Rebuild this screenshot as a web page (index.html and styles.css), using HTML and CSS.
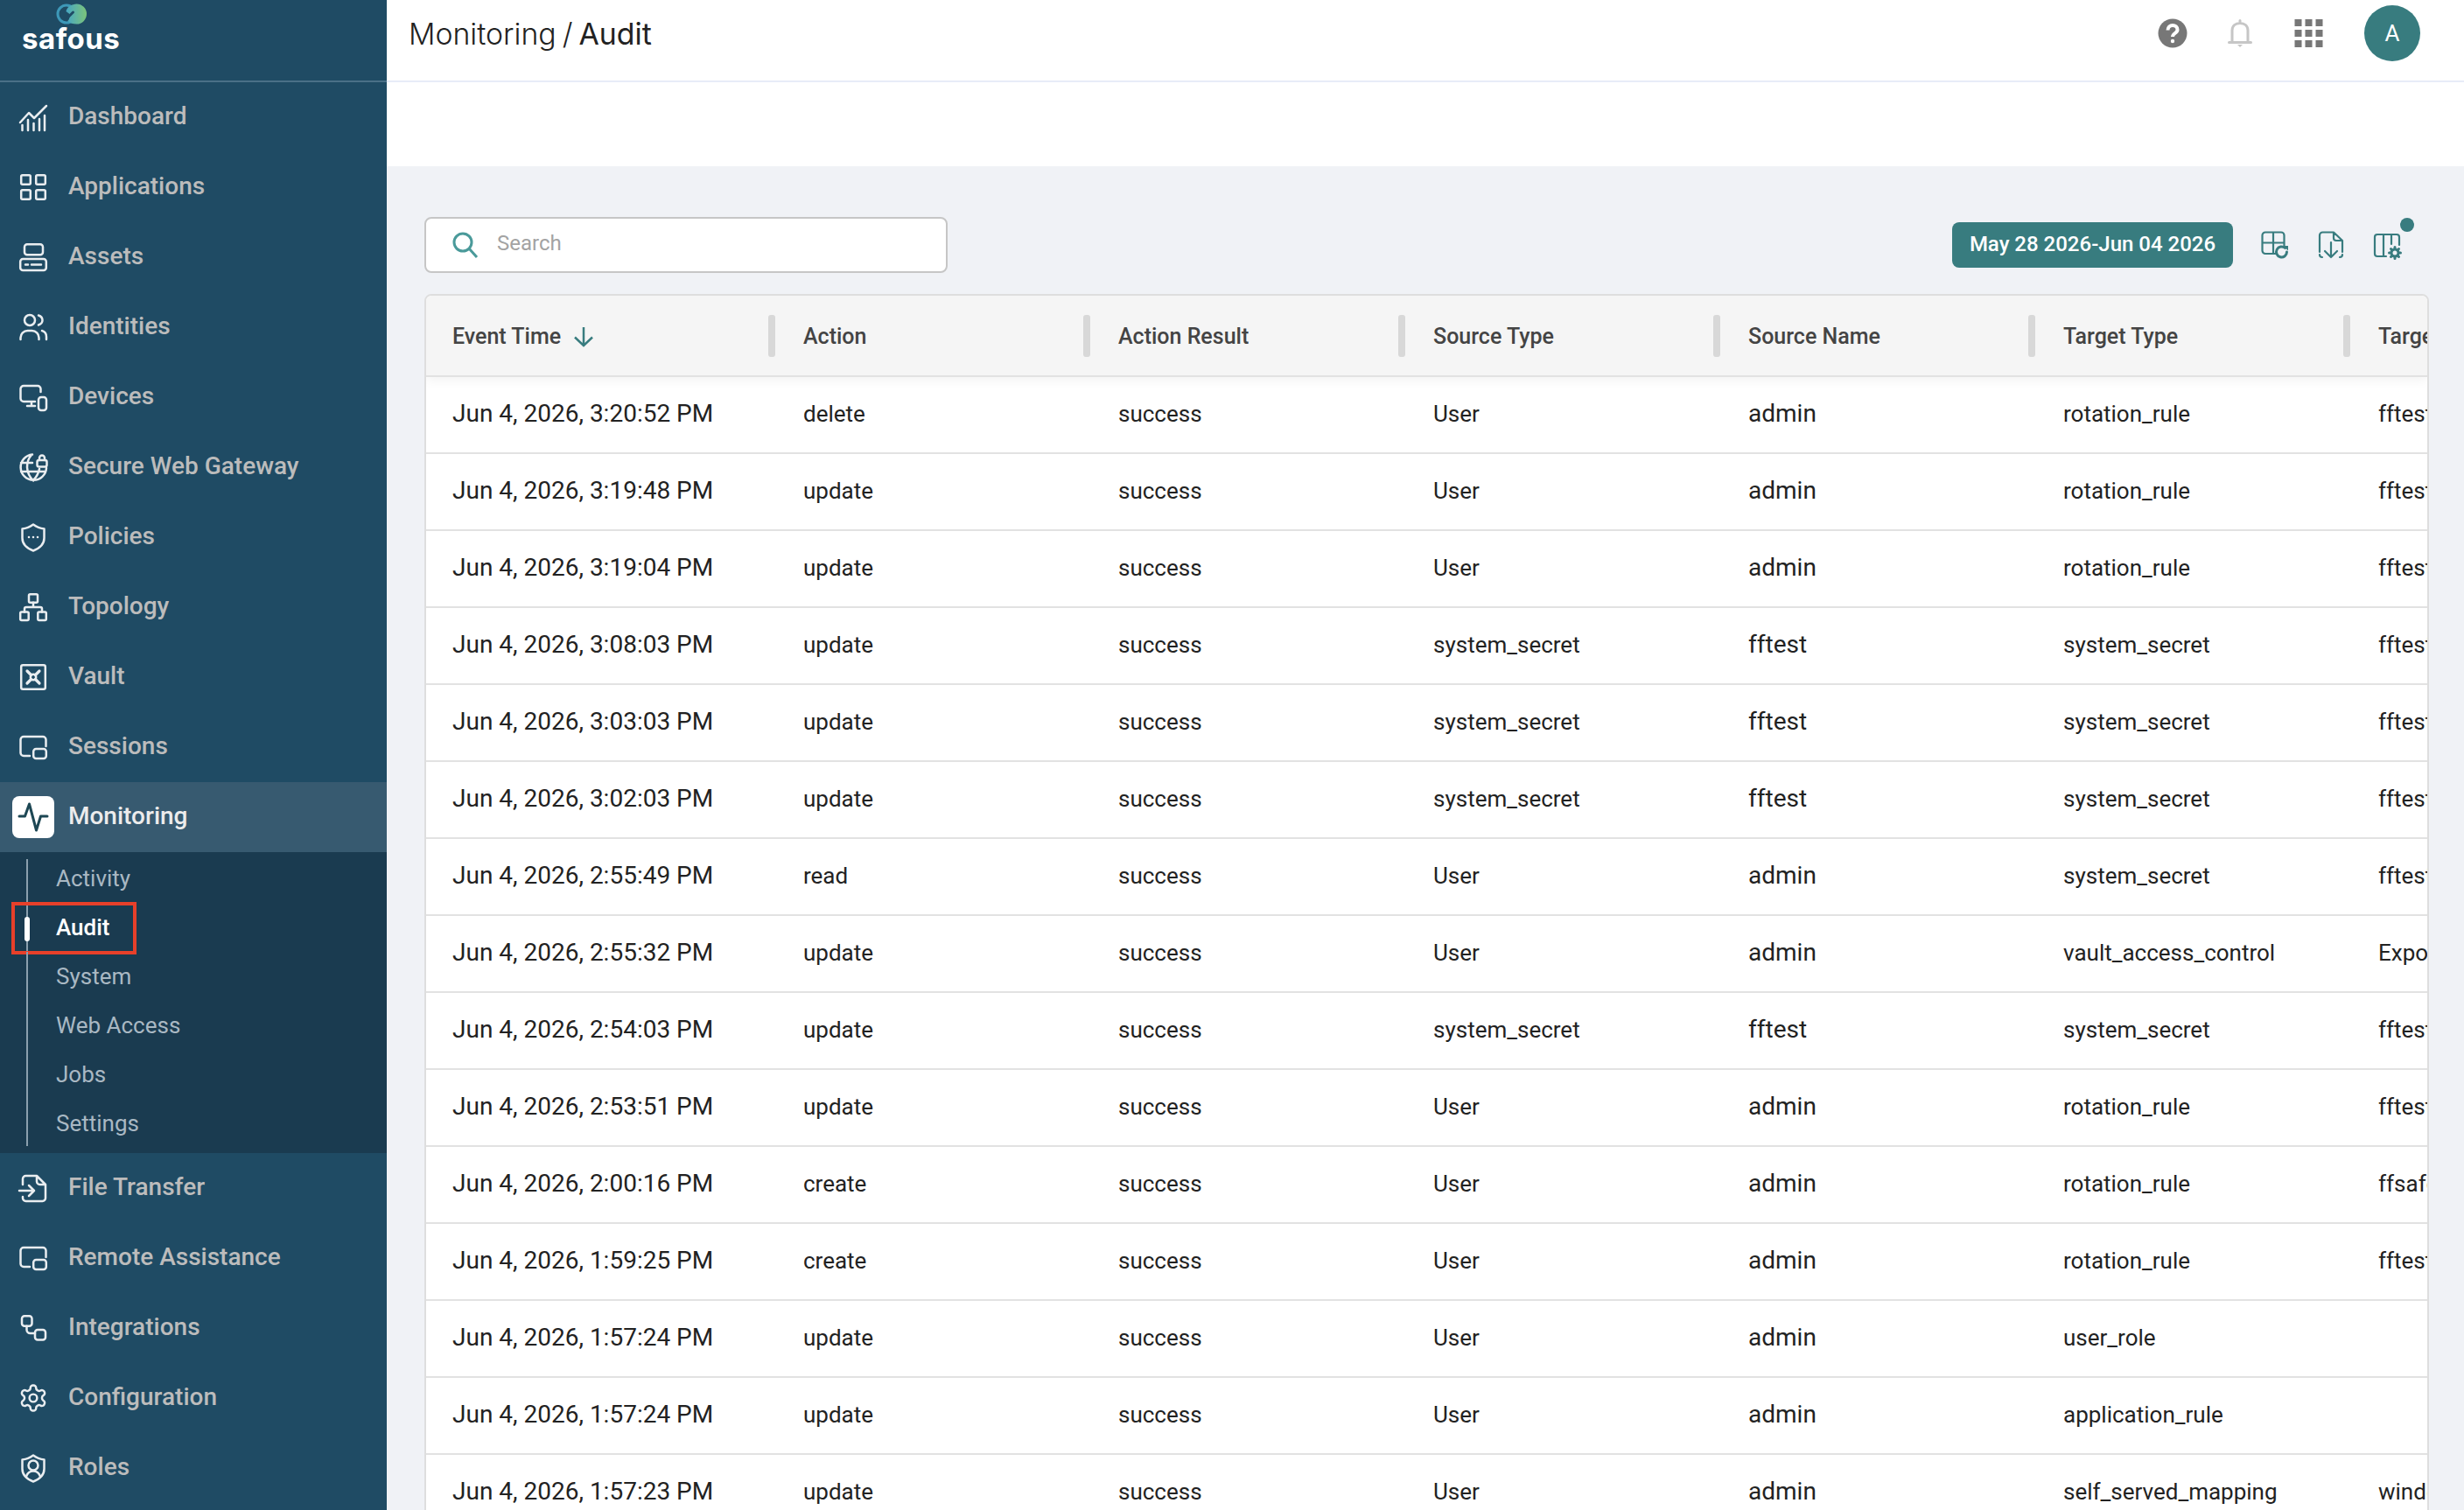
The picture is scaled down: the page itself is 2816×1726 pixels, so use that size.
FILE: index.html
```html
<!DOCTYPE html>
<html lang="en">
<head>
<meta charset="utf-8">
<title>Monitoring / Audit</title>
<link rel="stylesheet" href="styles.css">
</head>
<body>
<div class="app">
<aside class="sidebar">
  <div class="brand">
    <svg class="brand-mark" viewBox="0 0 34 24"><defs><linearGradient id="lg" x1="0" x2="1" y1="0" y2="0"><stop offset="0" stop-color="#46a6c4"/><stop offset="1" stop-color="#7cc47a"/></linearGradient></defs><circle cx="11.5" cy="12" r="10" fill="none" stroke="#3d98b8" stroke-width="3"/><path d="M11 9c1-5 7-8.500 12-8.500a11.500 11.500 0 0 1 0 23c-4 0-8-1-10-4 2-1 2-4 2-7.500z" fill="url(#lg)"/><path d="M13 16l6-6" stroke="#1f4b64" stroke-width="3" stroke-linecap="round"/></svg>
    <span class="brand-name">safous</span>
  </div>
  <nav class="nav">
    <a class="nav-item"><svg class="ico" viewBox="0 0 32 32"><path d="M1 22L11 11l6 6L31 3M3.500 31v-6M10 31V19M16.500 31v-8M23 31V18M29 31V14"/></svg><span>Dashboard</span></a>
    <a class="nav-item"><svg class="ico" viewBox="0 0 32 32"><rect x="2.200" y="2.200" width="10.600" height="10.600" rx="1.500"/><rect x="19.200" y="2.200" width="10.600" height="10.600" rx="1.500"/><rect x="2.200" y="19.200" width="10.600" height="10.600" rx="1.500"/><rect x="19.200" y="19.200" width="10.600" height="10.600" rx="1.500"/></svg><span>Applications</span></a>
    <a class="nav-item"><svg class="ico" viewBox="0 0 32 32"><rect x="6" y="1.200" width="21" height="12" rx="3"/><rect x="1.200" y="18" width="29.600" height="13" rx="3"/><path d="M7 24.500h3M14 24.500h11"/></svg><span>Assets</span></a>
    <a class="nav-item"><svg class="ico" viewBox="0 0 32 32"><circle cx="12" cy="8" r="6"/><path d="M22 2.500c3 1 4.500 3 4.500 5.500s-1.500 4.500-4.500 5.500M1.500 30v-2a8 8 0 0 1 8-8h5a8 8 0 0 1 8 8v2M26 20c3.500 1 5 4 5 7v3"/></svg><span>Identities</span></a>
    <a class="nav-item"><svg class="ico" viewBox="0 0 32 32"><path d="M18 21H5a3.500 3.500 0 0 1-3.500-3.500V6.500A3.500 3.500 0 0 1 5 3h16a3.500 3.500 0 0 1 3.500 3.500V10M9 26h9M14 21v5"/><rect x="22" y="16" width="9" height="15" rx="3"/></svg><span>Devices</span></a>
    <a class="nav-item"><svg class="ico" viewBox="0 0 32 32"><path d="M15 1.500A14.700 14.700 0 1 0 31 17M14 2c-7 8-7 20 2 29.500M16 31c4-4 6-8 7-13M2 11h13M2 21h28"/><rect x="20.500" y="8" width="11" height="7.500" rx="2"/><path d="M23 8V5.500a3 3 0 0 1 6 0V8"/></svg><span>Secure Web Gateway</span></a>
    <a class="nav-item"><svg class="ico" viewBox="0 0 32 32"><path d="M16 1.500c4 3 8 4.500 12.500 5v10.500c0 7-6 12-12.500 14.500C9.500 29 3.500 24 3.500 17V6.500C8 6 12 4.500 16 1.500z"/><path class="dots" d="M11 16h.01M16 16h.01M21 16h.01"/></svg><span>Policies</span></a>
    <a class="nav-item"><svg class="ico" viewBox="0 0 32 32"><rect x="11" y="1.200" width="10" height="9.500" rx="1.500"/><rect x="1.200" y="21.500" width="9.500" height="9.500" rx="1.500"/><rect x="21.300" y="21.500" width="9.500" height="9.500" rx="1.500"/><path d="M16 10.700V16M6 21.500V18a2 2 0 0 1 2-2h16a2 2 0 0 1 2 2v3.500"/></svg><span>Topology</span></a>
    <a class="nav-item"><svg class="ico" viewBox="0 0 32 32"><rect x="2.200" y="2.200" width="27.600" height="27.600" rx="2"/><path class="thick" d="M9 9l4.500 4.500M23 9l-4.500 4.500M9 23l4.500-4.500M23 23l-4.500-4.500"/><circle cx="16" cy="16" r="3.200"/></svg><span>Vault</span></a>
    <a class="nav-item"><svg class="ico" viewBox="0 0 32 32"><path d="M12 26H5a3.500 3.500 0 0 1-3.500-3.500v-15A3.500 3.500 0 0 1 5 4h22a3.500 3.500 0 0 1 3.500 3.500V15"/><rect x="16.200" y="18" width="14.600" height="11" rx="3"/></svg><span>Sessions</span></a>
    <a class="nav-item active"><span class="ico-box"><svg class="ico pulse" viewBox="0 0 32 32"><path d="M0 15h6.500L11.500 1l8 30 5-16H32"/></svg></span><span>Monitoring</span></a>
    <ul class="subnav">
      <li>Activity</li>
      <li class="current">Audit</li>
      <li>System</li>
      <li>Web Access</li>
      <li>Jobs</li>
      <li>Settings</li>
    </ul>
    <a class="nav-item"><svg class="ico" viewBox="0 0 32 32"><path d="M4 12V5.500A3.500 3.500 0 0 1 7.500 2H20l10 10v15.500a3.500 3.500 0 0 1-3.500 3.500h-19A3.500 3.500 0 0 1 4 27.500V26M20 2v6.500a3.500 3.500 0 0 0 3.500 3.500H30M0 19h17M11 13l6 6-6 6"/></svg><span>File Transfer</span></a>
    <a class="nav-item"><svg class="ico" viewBox="0 0 32 32"><path d="M12 26H5a3.500 3.500 0 0 1-3.500-3.500v-15A3.500 3.500 0 0 1 5 4h22a3.500 3.500 0 0 1 3.500 3.500V15"/><rect x="16.200" y="18" width="14.600" height="11" rx="3"/></svg><span>Remote Assistance</span></a>
    <a class="nav-item"><svg class="ico" viewBox="0 0 32 32"><rect x="3" y="2.200" width="11.500" height="11.500" rx="3"/><rect x="18" y="18" width="12" height="11.500" rx="3"/><path d="M8.500 13.700V18a4 4 0 0 0 4 4H18"/></svg><span>Integrations</span></a>
    <a class="nav-item"><svg class="ico gear" viewBox="1 1 22 22"><path d="M12.220 2h-.44a2 2 0 0 0-2 2v.18a2 2 0 0 1-1 1.730l-.43.25a2 2 0 0 1-2 0l-.15-.08a2 2 0 0 0-2.730.73l-.22.38a2 2 0 0 0 .73 2.730l.15.1a2 2 0 0 1 1 1.720v.51a2 2 0 0 1-1 1.740l-.15.09a2 2 0 0 0-.73 2.730l.22.38a2 2 0 0 0 2.730.73l.15-.08a2 2 0 0 1 2 0l.43.25a2 2 0 0 1 1 1.730V20a2 2 0 0 0 2 2h.44a2 2 0 0 0 2-2v-.18a2 2 0 0 1 1-1.730l.43-.25a2 2 0 0 1 2 0l.15.08a2 2 0 0 0 2.730-.73l.22-.39a2 2 0 0 0-.73-2.730l-.15-.08a2 2 0 0 1-1-1.740v-.5a2 2 0 0 1 1-1.740l.15-.09a2 2 0 0 0 .73-2.730l-.22-.38a2 2 0 0 0-2.730-.73l-.15.08a2 2 0 0 1-2 0l-.43-.25a2 2 0 0 1-1-1.730V4a2 2 0 0 0-2-2z"/><circle cx="12" cy="12" r="3"/></svg><span>Configuration</span></a>
    <a class="nav-item"><svg class="ico" viewBox="0 0 32 32"><path d="M16 1.500c4 3 8 4.500 12.500 5v10.500c0 7-6 12-12.500 14.500C9.500 29 3.500 24 3.500 17V6.500C8 6 12 4.500 16 1.500z"/><circle cx="16" cy="13" r="5.500"/><path d="M8 25.500c1.500-4 4.500-6 8-6s6.500 2 8 6"/></svg><span>Roles</span></a>
  </nav>
</aside>
<main class="main">
  <header class="topbar">
    <h1 class="crumbs"><span class="crumb-parent">Monitoring / </span>Audit</h1>
    <div class="top-actions">
      <svg class="help" viewBox="0 0 34 34"><circle cx="17" cy="17" r="16.500"/><path d="M11.500 13.500c0-3.500 2.500-5.500 5.500-5.500s5.500 2 5.500 5c0 4-5.500 4-5.500 8"/><circle class="help-dot" cx="17" cy="26" r="2.200"/></svg>
      <svg class="bell" viewBox="0 0 28 34"><path d="M14 2.500v3M5 26V14c0-5.500 4-8.500 9-8.500s9 3 9 8.500v12M1.500 27.500h25"/><path class="bell-clap" d="M11 30h6l-3 3z"/></svg>
      <svg class="apps" viewBox="0 0 32 32"><rect width="8" height="8"/><rect x="12" width="8" height="8"/><rect x="24" width="8" height="8"/><rect y="12" width="8" height="8"/><rect x="12" y="12" width="8" height="8"/><rect x="24" y="12" width="8" height="8"/><rect y="24" width="8" height="8"/><rect x="12" y="24" width="8" height="8"/><rect x="24" y="24" width="8" height="8"/></svg>
      <div class="avatar">A</div>
    </div>
  </header>
  <div class="spacer"></div>
  <section class="content">
    <div class="toolbar">
      <label class="search">
        <svg class="search-ico" viewBox="0 0 30 30"><circle cx="12" cy="12" r="10"/><path d="M19 19l9 10"/></svg>
        <span>Search</span>
      </label>
      <div class="tools">
        <button class="range">May 28 2026-Jun 04 2026</button>
        <svg class="tool" viewBox="0 0 32 32"><path d="M17 26H5a3.500 3.500 0 0 1-3.500-3.500V5A3.500 3.500 0 0 1 5 1.500h18A3.500 3.500 0 0 1 26.500 5v12M14 1.500V26M1.500 13.500h25"/><path class="thick" d="M29.500 24a6 6 0 1 1-2-4.500"/><path class="fillhead" d="M25.500 17h5.500v5.500z"/></svg>
        <svg class="tool" viewBox="0 0 32 32"><path d="M3 24V5a3.500 3.500 0 0 1 3.500-3.500H19L29 11v13M19 1.500V8a3 3 0 0 0 3 3h7M16 13v17M9 23l7 7 7-7M3 27a3 3 0 0 0 3 3M29 27a3 3 0 0 1-3 3"/></svg>
        <div class="tool-wrap">
          <svg class="tool" viewBox="0 0 32 32"><path d="M15 29H5a3 3 0 0 1-3-3V7a3 3 0 0 1 3-3h22a3 3 0 0 1 3 3v9M12 4v25M21 4v11"/><circle class="thick" cx="25" cy="25" r="4"/><path class="thick" d="M25 18.500v2M25 29.500v2M18.500 25h2M29.500 25h2M20.500 20.500l1.500 1.500M28 28l1.500 1.500M20.500 29.500L22 28M28 22l1.500-1.500"/></svg>
          <span class="dot"></span>
        </div>
      </div>
    </div>
    <div class="table">
      <div class="row head">
        <div class="cell"><span class="head-label">Event Time<svg class="sort" viewBox="0 0 24 24"><path d="M12 1v21M2 12.500L12 22l10-9.500"/></svg></span><i class="sep"></i></div>
        <div class="cell">Action<i class="sep"></i></div>
        <div class="cell">Action Result<i class="sep"></i></div>
        <div class="cell">Source Type<i class="sep"></i></div>
        <div class="cell">Source Name<i class="sep"></i></div>
        <div class="cell">Target Type<i class="sep"></i></div>
        <div class="cell">Target Name</div>
      </div>
      <div class="row"><div class="cell big">Jun 4, 2026, 3:20:52 PM</div><div class="cell">delete</div><div class="cell">success</div><div class="cell">User</div><div class="cell big">admin</div><div class="cell">rotation_rule</div><div class="cell">fftest</div></div>
      <div class="row"><div class="cell big">Jun 4, 2026, 3:19:48 PM</div><div class="cell">update</div><div class="cell">success</div><div class="cell">User</div><div class="cell big">admin</div><div class="cell">rotation_rule</div><div class="cell">fftest</div></div>
      <div class="row"><div class="cell big">Jun 4, 2026, 3:19:04 PM</div><div class="cell">update</div><div class="cell">success</div><div class="cell">User</div><div class="cell big">admin</div><div class="cell">rotation_rule</div><div class="cell">fftest</div></div>
      <div class="row"><div class="cell big">Jun 4, 2026, 3:08:03 PM</div><div class="cell">update</div><div class="cell">success</div><div class="cell">system_secret</div><div class="cell big">fftest</div><div class="cell">system_secret</div><div class="cell">fftest</div></div>
      <div class="row"><div class="cell big">Jun 4, 2026, 3:03:03 PM</div><div class="cell">update</div><div class="cell">success</div><div class="cell">system_secret</div><div class="cell big">fftest</div><div class="cell">system_secret</div><div class="cell">fftest</div></div>
      <div class="row"><div class="cell big">Jun 4, 2026, 3:02:03 PM</div><div class="cell">update</div><div class="cell">success</div><div class="cell">system_secret</div><div class="cell big">fftest</div><div class="cell">system_secret</div><div class="cell">fftest</div></div>
      <div class="row"><div class="cell big">Jun 4, 2026, 2:55:49 PM</div><div class="cell">read</div><div class="cell">success</div><div class="cell">User</div><div class="cell big">admin</div><div class="cell">system_secret</div><div class="cell">fftest</div></div>
      <div class="row"><div class="cell big">Jun 4, 2026, 2:55:32 PM</div><div class="cell">update</div><div class="cell">success</div><div class="cell">User</div><div class="cell big">admin</div><div class="cell">vault_access_control</div><div class="cell">Export</div></div>
      <div class="row"><div class="cell big">Jun 4, 2026, 2:54:03 PM</div><div class="cell">update</div><div class="cell">success</div><div class="cell">system_secret</div><div class="cell big">fftest</div><div class="cell">system_secret</div><div class="cell">fftest</div></div>
      <div class="row"><div class="cell big">Jun 4, 2026, 2:53:51 PM</div><div class="cell">update</div><div class="cell">success</div><div class="cell">User</div><div class="cell big">admin</div><div class="cell">rotation_rule</div><div class="cell">fftest</div></div>
      <div class="row"><div class="cell big">Jun 4, 2026, 2:00:16 PM</div><div class="cell">create</div><div class="cell">success</div><div class="cell">User</div><div class="cell big">admin</div><div class="cell">rotation_rule</div><div class="cell">ffsafous</div></div>
      <div class="row"><div class="cell big">Jun 4, 2026, 1:59:25 PM</div><div class="cell">create</div><div class="cell">success</div><div class="cell">User</div><div class="cell big">admin</div><div class="cell">rotation_rule</div><div class="cell">fftest</div></div>
      <div class="row"><div class="cell big">Jun 4, 2026, 1:57:24 PM</div><div class="cell">update</div><div class="cell">success</div><div class="cell">User</div><div class="cell big">admin</div><div class="cell">user_role</div><div class="cell"></div></div>
      <div class="row"><div class="cell big">Jun 4, 2026, 1:57:24 PM</div><div class="cell">update</div><div class="cell">success</div><div class="cell">User</div><div class="cell big">admin</div><div class="cell">application_rule</div><div class="cell"></div></div>
      <div class="row"><div class="cell big">Jun 4, 2026, 1:57:23 PM</div><div class="cell">update</div><div class="cell">success</div><div class="cell">User</div><div class="cell big">admin</div><div class="cell">self_served_mapping</div><div class="cell">windows</div></div>
    </div>
  </section>
</main>
</div>
</body>
</html>
```
FILE: styles.css
```css
* { box-sizing: border-box; }
html, body { margin: 0; height: 100%; overflow: hidden; }
body { font-family: Roboto, "Liberation Sans", sans-serif; background: #f0f2f6; color: #222; }
.app { display: flex; height: 1726px; overflow: hidden; }

/* Sidebar */
.sidebar { width: 442px; flex: none; background: #1f4b64; display: flex; flex-direction: column; }
.brand { height: 94px; flex: none; border-bottom: 2px solid #4a7087; display: flex; flex-direction: column; align-items: flex-start; padding: 4px 0 0 25px; }
.brand-mark { width: 35px; height: 24px; margin-left: 39px; display: block; }
.brand-name { font-family: Inter, sans-serif; font-weight: 700; font-size: 33px; line-height: 30px; margin-top: 1px; color: #fff; letter-spacing: 0.500px; }
.nav { display: flex; flex-direction: column; }
.nav-item { height: 80px; display: flex; align-items: center; padding-left: 22px; gap: 24px; font-size: 28px; font-weight: 500; color: #bcbcbc; }
.nav-item > span:last-child { padding-bottom: 4px; }
.ico { width: 32px; height: 32px; flex: none; fill: none; stroke: #e9edf0; stroke-width: 2.500; stroke-linecap: round; stroke-linejoin: round; overflow: visible; }
.ico .thick { stroke-width: 3.200; }
.ico .dots { stroke-width: 2.600; }
.ico.gear { stroke-width: 1.700; }
.nav-item.active { background: #375a70; color: #ececec; padding-left: 14px; gap: 16px; }
.ico-box { width: 48px; height: 48px; flex: none; background: #fff; border-radius: 8px; display: flex; align-items: center; justify-content: center; }
.ico.pulse { stroke: #1d4754; stroke-width: 3; }
.subnav { list-style: none; margin: 0; padding: 8px 0; background: #1a3b50; }
.subnav li { position: relative; height: 56px; margin-left: 30px; padding-left: 32px; border-left: 2px solid #8a9fae; font-size: 26px; line-height: 56px; color: #a9b8c3; }
.subnav li:first-child { height: 50px; line-height: 44px; }
.subnav li:last-child { height: 54px; line-height: 56px; }
.subnav .current { color: #fff; font-weight: 500; }
.subnav .current::before { content: ""; position: absolute; left: -4px; top: 16px; width: 6px; height: 28px; border-radius: 3px; background: #fff; }
.subnav .current::after { content: ""; box-sizing: border-box; position: absolute; left: -19px; top: -1px; width: 143px; height: 60px; border: 4px solid #e8402a; }

/* Main */
.main { flex: 1; min-width: 0; display: flex; flex-direction: column; }
.topbar { height: 94px; flex: none; background: #fff; border-bottom: 2px solid #e8ecf8; display: flex; align-items: center; justify-content: space-between; padding: 0 50px 16px 25px; }
.crumbs { margin: 0; font-family: Inter, sans-serif; font-size: 33.800px; font-weight: 400; color: #222; word-spacing: -2.500px; }
.crumb-parent { font-weight: 300; }
.top-actions { display: flex; align-items: center; }
.help { width: 34px; height: 34px; fill: #777; margin-right: 46px; }
.help path { fill: none; stroke: #fff; stroke-width: 4; }
.help .help-dot { fill: #fff; }
.bell { width: 28px; height: 34px; fill: none; stroke: #c6c6c6; stroke-width: 3; stroke-linecap: round; margin-right: 48px; }
.bell-clap { fill: #c6c6c6; stroke: none; }
.apps { width: 33px; height: 32px; fill: #777; margin-right: 47px; }
.avatar { width: 64px; height: 64px; border-radius: 50%; background: #387c7f; color: #fff; font-size: 26px; display: flex; align-items: center; justify-content: center; }
.spacer { height: 96px; flex: none; background: #fff; }
.content { padding: 58px 40px 0 43px; }
.toolbar { height: 64px; display: flex; align-items: center; justify-content: space-between; margin-bottom: 24px; }
.search { width: 598px; height: 64px; background: #fff; border: 2.500px solid #c6c6c6; border-radius: 8px; display: flex; align-items: center; padding-left: 30px; gap: 21px; font-size: 24px; color: #a3a3a3; }
.search span { padding-bottom: 4px; }
.search-ico { width: 30px; height: 30px; fill: none; stroke: #4a9a9a; stroke-width: 3; }
.tools { display: flex; align-items: center; gap: 32px; padding-right: 32px; }
.range { width: 321px; height: 52px; border: 0; border-radius: 8px; background: #387c7f; color: #fff; font: 500 24px Roboto, sans-serif; padding: 0 0 2px; }
.tool { width: 32px; height: 32px; display: block; fill: none; stroke: #387c7f; stroke-width: 2.200; stroke-linecap: round; stroke-linejoin: round; overflow: visible; }
.tool .thick { stroke-width: 3; }
.tool .fillhead { fill: #387c7f; stroke: none; }
.tool-wrap { position: relative; }
.dot { position: absolute; left: 31px; top: -15px; width: 16px; height: 16px; border-radius: 50%; background: #387c7f; }

/* Table */
.table { border: 2px solid #dedede; border-radius: 8px 8px 0 0; overflow: hidden; background: #fff; }
.row { display: grid; grid-template-columns: 399px repeat(6, 360px); height: 88px; border-bottom: 2px solid #e2e2e2; align-items: center; font-size: 26px; color: #222; }
.cell { padding-left: 32px; padding-bottom: 3px; white-space: nowrap; }
.cell:first-child { padding-left: 30px; }
.cell.big { font-size: 28px; }
.row.head { position: relative; height: 93px; background: #f5f5f5; font-size: 25px; font-weight: 500; color: #444; box-shadow: 0 4px 12px rgba(0,0,0,.05); }
.head .cell { display: flex; align-items: center; justify-content: space-between; height: 100%; padding-top: 2px; padding-bottom: 0; }
.head-label { display: flex; align-items: center; gap: 14px; }
.sep { width: 8px; height: 48px; margin-top: -2px; background: #d8d8d8; border-radius: 3px; }
.sort { width: 24px; height: 24px; fill: none; stroke: #387c7f; stroke-width: 2.500; }
```
